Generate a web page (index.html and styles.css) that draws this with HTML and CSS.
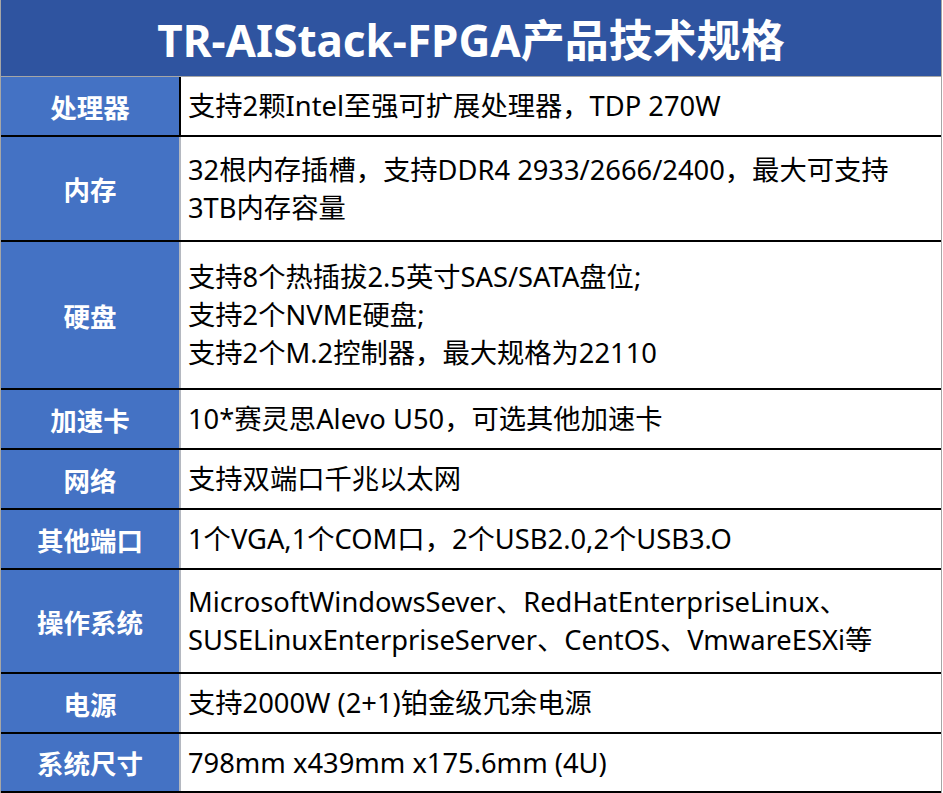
FILE: index.html
```html
<!DOCTYPE html>
<html lang="zh-CN">
<head>
<meta charset="utf-8">
<title>TR-AIStack-FPGA产品技术规格</title>
<link rel="stylesheet" href="styles.css">
</head>
<body>
<div class="sheet">
  <div class="title">TR-AIStack-FPGA产品技术规格</div>
  <div class="row h58 first">
    <div class="label">处理器</div>
    <div class="value">支持2颗Intel至强可扩展处理器，TDP 270W</div>
  </div>
  <div class="row h103">
    <div class="label">内存</div>
    <div class="value">32根内存插槽，支持DDR4 2933/2666/2400，最大可支持<br>3TB内存容量</div>
  </div>
  <div class="row h146">
    <div class="label">硬盘</div>
    <div class="value">支持8个热插拔2.5英寸SAS/SATA盘位;<br>支持2个NVME硬盘;<br>支持2个M.2控制器，最大规格为22110</div>
  </div>
  <div class="row h58">
    <div class="label">加速卡</div>
    <div class="value">10*赛灵思Alevo U50，可选其他加速卡</div>
  </div>
  <div class="row h58">
    <div class="label">网络</div>
    <div class="value">支持双端口千兆以太网</div>
  </div>
  <div class="row h58">
    <div class="label">其他端口</div>
    <div class="value">1个VGA,1个COM口，2个USB2.0,2个USB3.O</div>
  </div>
  <div class="row h102">
    <div class="label">操作系统</div>
    <div class="value">MicrosoftWindowsSever、RedHatEnterpriseLinux、<br>SUSELinuxEnterpriseServer、CentOS、VmwareESXi等</div>
  </div>
  <div class="row h58">
    <div class="label">电源</div>
    <div class="value">支持2000W (2+1)铂金级冗余电源</div>
  </div>
  <div class="row h57">
    <div class="label">系统尺寸</div>
    <div class="value">798mm x439mm x175.6mm (4U)</div>
  </div>
</div>
</body>
</html>
```

FILE: styles.css
```css
html, body {
  margin: 0;
  padding: 0;
  background: #ffffff;
}

.sheet {
  width: 940px;
  border-left: 1px solid #a6a6a6;
  border-right: 1px solid #a6a6a6;
  font-family: "Noto Sans", "Noto Sans CJK SC", sans-serif;
}

.title {
  box-sizing: border-box;
  height: 77px;
  background: #2f54a0;
  color: #ffffff;
  font-weight: 700;
  font-size: 44px;
  display: flex;
  align-items: center;
  justify-content: center;
  border-bottom: 1px solid #a6a6a6;
}

.row {
  display: grid;
  grid-template-columns: 180px 1fr;
  border-bottom: 2px solid #000000;
}

.h58 { height: 58px; }
.h57 { height: 57px; }
.h103 { height: 103px; }
.h102 { height: 102px; }
.h146 { height: 146px; }

.label {
  background: #4472c4;
  color: #ffffff;
  font-weight: 700;
  font-size: 26.5px;
  display: flex;
  align-items: center;
  justify-content: center;
  border-right: 2px solid #b4b8c0;
  font-family: "Noto Sans CJK SC", sans-serif;
}

.first .label {
  border-right-color: #000000;
}

.value {
  color: #000000;
  font-size: 27.3px;
  line-height: 38px;
  padding-left: 7px;
  display: flex;
  align-items: center;
  white-space: nowrap;
}
```
